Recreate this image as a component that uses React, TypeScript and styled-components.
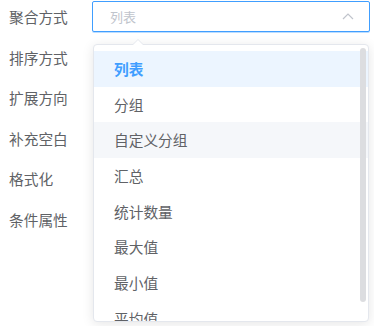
import React from "react"
import styled, { createGlobalStyle } from "styled-components"

const GlobalStyle = createGlobalStyle`
  html, body {
    margin: 0;
    padding: 0;
    background: #fff;
  }
  body {
    font-family: "Noto Sans CJK SC", "Noto Sans", sans-serif;
  }
`

const Page = styled("div")`
  width: 374px;
  height: 326px;
  box-sizing: border-box;
  padding: 1px 4px 0 9px;
  overflow: hidden;
`

const FormItem = styled("div")`
  display: flex;
  align-items: center;
  height: 31px;
  margin-bottom: 9.6px;
`

const Label = styled("div")`
  width: 83px;
  flex: none;
  font-size: 14.7px;
  color: #606266;
  line-height: 31px;
`

const SelectWrap = styled("div")`
  position: relative;
  flex: 1;
  height: 31px;
`

const Input = styled("div")`
  box-sizing: border-box;
  height: 31px;
  border: 1px solid #409eff;
  box-shadow: 0 1px 0 rgba(64, 158, 255, 0.35);
  border-radius: 2px;
  display: flex;
  align-items: center;
  justify-content: space-between;
  padding: 0 15px 0 17px;
  background: #fff;
`

const Placeholder = styled("span")`
  font-size: 13px;
  color: #c0c4cc;
`

const Dropdown = styled("div")`
  position: absolute;
  top: 43px;
  left: 1px;
  right: 1px;
  height: 278px;
  box-sizing: border-box;
  border: 1px solid #e4e7ed;
  border-radius: 4px;
  background: #fff;
  box-shadow: 0 2px 12px rgba(0, 0, 0, 0.1);
  z-index: 10;
`

const Arrow = styled("div")`
  position: absolute;
  top: -6px;
  left: 38px;
  width: 0;
  height: 0;
  border-left: 6px solid transparent;
  border-right: 6px solid transparent;
  border-bottom: 6px solid #e4e7ed;

  &::after {
    content: "";
    position: absolute;
    top: 1px;
    left: -6px;
    border-left: 6px solid transparent;
    border-right: 6px solid transparent;
    border-bottom: 6px solid #fff;
  }
`

const ScrollWrap = styled("div")`
  height: 100%;
  overflow: hidden;
  border-radius: 4px;
`

const List = styled("ul")`
  list-style: none;
  margin: 0;
  padding: 6px 0;
`

const Item = styled("li")<{ $selected?: boolean; $hover?: boolean }>`
  height: 35.7px;
  line-height: 35.7px;
  padding: 0 20px;
  font-size: 14.7px;
  color: ${({ $selected }) => ($selected ? "#409eff" : "#606266")};
  font-weight: ${({ $selected }) => ($selected ? 700 : 400)};
  background: ${({ $selected, $hover }) =>
    $selected ? "#ecf5ff" : $hover ? "#f5f7fa" : "transparent"};
`

const Thumb = styled("div")`
  position: absolute;
  top: 3px;
  right: 2px;
  width: 6px;
  height: 254px;
  border-radius: 3px;
  background: #dcdde0;
`

const labels = ["聚合方式", "排序方式", "扩展方向", "补充空白", "格式化", "条件属性"]

const options = ["列表", "分组", "自定义分组", "汇总", "统计数量", "最大值", "最小值", "平均值", "求和"]

const ArrowUp = () => (
  <svg width="12" height="7" viewBox="0 0 12 7">
    <polyline points="1,6 6,1 11,6" fill="none" stroke="#c0c4cc" strokeWidth="1.2" />
  </svg>
)

const App: React.FC = () => {
  return (
    <Page>
      <GlobalStyle />
      {labels.map((label, i) => (
        <FormItem key={label}>
          <Label>{label}</Label>
          {i === 0 && (
            <SelectWrap>
              <Input>
                <Placeholder>列表</Placeholder>
                <ArrowUp />
              </Input>
              <Dropdown>
                <Arrow />
                <ScrollWrap>
                  <List>
                    {options.map((opt, j) => (
                      <Item key={opt} $selected={j === 0} $hover={j === 2}>
                        {opt}
                      </Item>
                    ))}
                  </List>
                </ScrollWrap>
                <Thumb />
              </Dropdown>
            </SelectWrap>
          )}
        </FormItem>
      ))}
    </Page>
  )
}

export default App
